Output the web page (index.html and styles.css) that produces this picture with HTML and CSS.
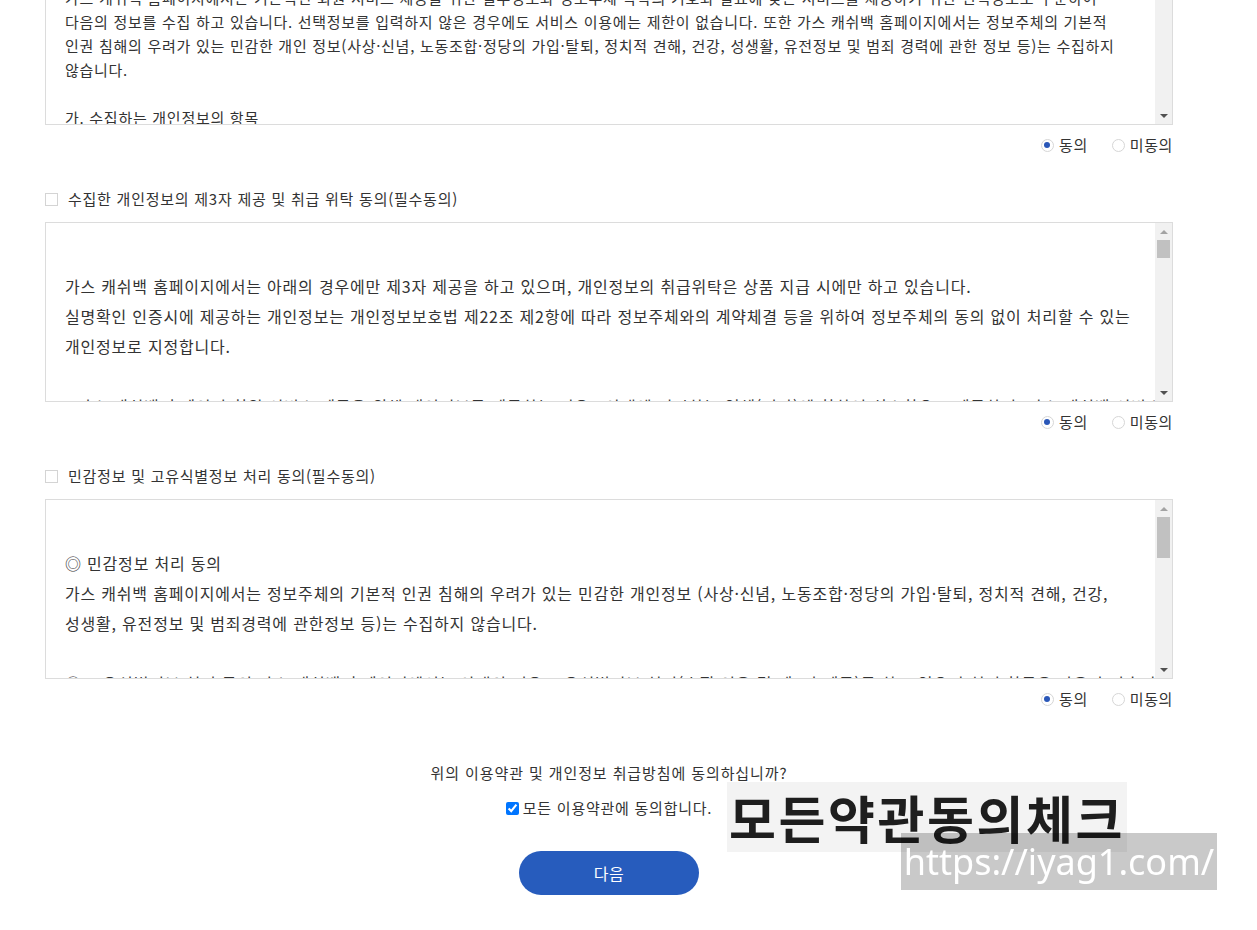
FILE: index.html
```html
<!DOCTYPE html>
<html lang="ko">
<head>
<meta charset="utf-8">
<title>약관 동의</title>
<link rel="stylesheet" href="styles.css">
</head>
<body>
<div class="page">

  <section class="term">
    <div class="term-box">
      <div class="term-text term-text-small">
        <p>제1조 가스 캐쉬백 홈페이지 개인정보 수집 및 이용에 관한 안내</p>
        <p>가스 캐쉬백 홈페이지에서는 기본적인 회원 서비스 제공을 위한 필수정보와 정보주체 각각의 기호와 필요에 맞는 서비스를 제공하기 위한 선택정보로 구분하여</p>
        <p>다음의 정보를 수집 하고 있습니다. 선택정보를 입력하지 않은 경우에도 서비스 이용에는 제한이 없습니다. 또한 가스 캐쉬백 홈페이지에서는 정보주체의 기본적</p>
        <p>인권 침해의 우려가 있는 민감한 개인 정보(사상·신념, 노동조합·정당의 가입·탈퇴, 정치적 견해, 건강, 성생활, 유전정보 및 범죄 경력에 관한 정보 등)는 수집하지</p>
        <p>않습니다.</p>
        <p>&nbsp;</p>
        <p>가. 수집하는 개인정보의 항목</p>
        <p>- 필수항목 : 성명, 생년월일, 휴대전화번호, 주소, 도시가스 고객번호</p>
        <p>- 선택항목 : 이메일 주소, 자택 전화번호</p>
      </div>
      <div class="scrollbar">
        <span class="sb-btn sb-up"></span>
        <span class="sb-thumb sb-thumb-small"></span>
        <span class="sb-track"></span>
        <span class="sb-btn sb-down"></span>
      </div>
    </div>
    <div class="choices">
      <label class="choice"><span class="radio is-on"></span>동의</label>
      <label class="choice"><span class="radio"></span>미동의</label>
    </div>
  </section>

  <section class="term">
    <h3 class="term-title"><span class="box-check"></span>수집한 개인정보의 제3자 제공 및 취급 위탁 동의(필수동의)</h3>
    <div class="term-box">
      <div class="term-text">
        <p>&nbsp;</p>
        <p>가스 캐쉬백 홈페이지에서는 아래의 경우에만 제3자 제공을 하고 있으며, 개인정보의 취급위탁은 상품 지급 시에만 하고 있습니다.</p>
        <p>실명확인 인증시에 제공하는 개인정보는 개인정보보호법 제22조 제2항에 따라 정보주체와의 계약체결 등을 위하여 정보주체의 동의 없이 처리할 수 있는</p>
        <p>개인정보로 지정합니다.</p>
        <p>&nbsp;</p>
        <p>- 가스 캐쉬백 홈페이지 회원 서비스 제공을 위해 개인정보를 제공하는 경우 : 아래에 명시하는 업체(기관)에 한하여 최소한으로 제공하며, 가스 캐쉬백 서비스 제공을</p>
        <p>&nbsp;</p>
        <p>가. 개인정보를 제공받는 자 : 한국가스공사, 지역 도시가스사</p>
      </div>
      <div class="scrollbar">
        <span class="sb-btn sb-up"></span>
        <span class="sb-thumb sb-thumb-small"></span>
        <span class="sb-track"></span>
        <span class="sb-btn sb-down"></span>
      </div>
    </div>
    <div class="choices">
      <label class="choice"><span class="radio is-on"></span>동의</label>
      <label class="choice"><span class="radio"></span>미동의</label>
    </div>
  </section>

  <section class="term">
    <h3 class="term-title"><span class="box-check"></span>민감정보 및 고유식별정보 처리 동의(필수동의)</h3>
    <div class="term-box">
      <div class="term-text">
        <p>&nbsp;</p>
        <p>◎ 민감정보 처리 동의</p>
        <p>가스 캐쉬백 홈페이지에서는 정보주체의 기본적 인권 침해의 우려가 있는 민감한 개인정보 (사상·신념, 노동조합·정당의 가입·탈퇴, 정치적 견해, 건강,</p>
        <p>성생활, 유전정보 및 범죄경력에 관한정보 등)는 수집하지 않습니다.</p>
        <p>&nbsp;</p>
        <p>◎ 고유식별정보 처리 동의 가스 캐쉬백 홈페이지에서는 아래의 경우 고유식별정보 처리(수집·이용 및 제3자 제공)를 하고 있으며 처리 항목은 다음과 같습니다.</p>
        <p>&nbsp;</p>
        <p>가. 처리 항목 : 주민등록번호</p>
      </div>
      <div class="scrollbar">
        <span class="sb-btn sb-up"></span>
        <span class="sb-thumb sb-thumb-large"></span>
        <span class="sb-track"></span>
        <span class="sb-btn sb-down"></span>
      </div>
    </div>
    <div class="choices">
      <label class="choice"><span class="radio is-on"></span>동의</label>
      <label class="choice"><span class="radio"></span>미동의</label>
    </div>
  </section>

  <div class="confirm">
    <p class="confirm-question">위의 이용약관 및 개인정보 취급방침에 동의하십니까?</p>
    <label class="confirm-all"><input type="checkbox" checked>모든 이용약관에 동의합니다.</label>
    <button class="btn-next" type="button">다음</button>
  </div>

</div>

<div class="wm-title">모든약관동의체크</div>
<div class="wm-url">https://iyag1.com/</div>
</body>
</html>
```

FILE: styles.css
```css
html, body {
  margin: 0;
  padding: 0;
  overflow: hidden;
  background: #ffffff;
}

body {
  font-family: "Noto Sans CJK KR", "Noto Sans", sans-serif;
  color: #333333;
}

.page {
  width: 1128px;
  margin: -55px 0 0 45px;
}

.term + .term {
  margin-top: 22px;
}

.term-title {
  display: flex;
  align-items: center;
  gap: 10px;
  margin: 0 0 11px;
  height: 24px;
  font-size: 15px;
  font-weight: 400;
  line-height: 24px;
  color: #333333;
  letter-spacing: 0.75px;
}

.box-check {
  width: 13px;
  height: 13px;
  box-sizing: border-box;
  border: 1px solid #d4d4d4;
  background: #ffffff;
  flex: none;
}

/* text box with scrollbar */
.term-box {
  display: flex;
  box-sizing: border-box;
  height: 180px;
  border: 1px solid #dcdcdc;
  background: #ffffff;
}

.term-text {
  flex: 1;
  min-width: 0;
  overflow: hidden;
  padding: 18px 0 0 19px;
  font-size: 16px;
  line-height: 30px;
  color: #333333;
  white-space: nowrap;
  letter-spacing: 0.8px;
}

.term-text p {
  margin: 0;
}

.term-text-small {
  padding-top: 16px;
  font-size: 15px;
  line-height: 24px;
  letter-spacing: 0.72px;
}

.scrollbar {
  display: flex;
  flex-direction: column;
  width: 17px;
  flex: none;
  background: #f1f1f1;
}

.sb-btn {
  display: flex;
  align-items: center;
  justify-content: center;
  height: 17px;
  flex: none;
}

.sb-up::before {
  content: "";
  border-left: 4px solid transparent;
  border-right: 4px solid transparent;
  border-bottom: 4px solid #a3a3a3;
}

.sb-down::before {
  content: "";
  border-left: 4px solid transparent;
  border-right: 4px solid transparent;
  border-top: 4px solid #505050;
}

.sb-thumb {
  flex: none;
  margin: 0 2px;
  background: #c1c1c1;
}

.sb-thumb-small {
  height: 18px;
}

.sb-thumb-large {
  height: 41px;
}

.sb-track {
  flex: 1;
}

/* radio choices */
.choices {
  display: flex;
  justify-content: flex-end;
  align-items: center;
  gap: 24px;
  height: 40px;
}

.choice {
  display: flex;
  align-items: center;
  gap: 5px;
  font-size: 15px;
  line-height: 20px;
  color: #333333;
  letter-spacing: 0.6px;
}

.radio {
  position: relative;
  width: 13px;
  height: 13px;
  box-sizing: border-box;
  border: 1px solid #d6d6d6;
  border-radius: 50%;
  background: #ffffff;
  flex: none;
}

.radio.is-on::after {
  content: "";
  position: absolute;
  left: 50%;
  top: 50%;
  width: 6px;
  height: 6px;
  margin: -3px 0 0 -3px;
  border-radius: 50%;
  background: #2a57b8;
}

/* confirm */
.confirm {
  display: flex;
  flex-direction: column;
  align-items: center;
  margin-top: 42px;
}

.confirm-question {
  margin: 0;
  font-size: 15px;
  line-height: 24px;
  color: #333333;
  letter-spacing: 0.9px;
}

.confirm-all {
  display: flex;
  align-items: center;
  gap: 4px;
  margin-top: 11px;
  font-size: 15px;
  line-height: 24px;
  color: #333333;
  letter-spacing: 0.75px;
}

.confirm-all input {
  margin: 0;
  width: 13px;
  height: 13px;
}

.btn-next {
  margin-top: 31px;
  width: 180px;
  height: 44px;
  border: 0;
  border-radius: 22px;
  background: #275cbd;
  color: #ffffff;
  font-family: "Noto Sans CJK KR", "Noto Sans", sans-serif;
  font-size: 16px;
  letter-spacing: 0.5px;
}

/* watermark overlays */
.wm-title {
  position: fixed;
  left: 727px;
  top: 782px;
  width: 400px;
  height: 70px;
  background: #f3f3f3;
  color: #1e1e1e;
  font-size: 51px;
  font-weight: 700;
  line-height: 70px;
  text-align: center;
  letter-spacing: 2.6px;
}

.wm-url {
  position: fixed;
  left: 901px;
  top: 833px;
  width: 316px;
  height: 57px;
  background: rgba(0, 0, 0, 0.21);
  color: #ffffff;
  font-family: "Noto Sans", sans-serif;
  font-size: 36px;
  line-height: 57px;
  text-align: center;
  white-space: nowrap;
}
```
